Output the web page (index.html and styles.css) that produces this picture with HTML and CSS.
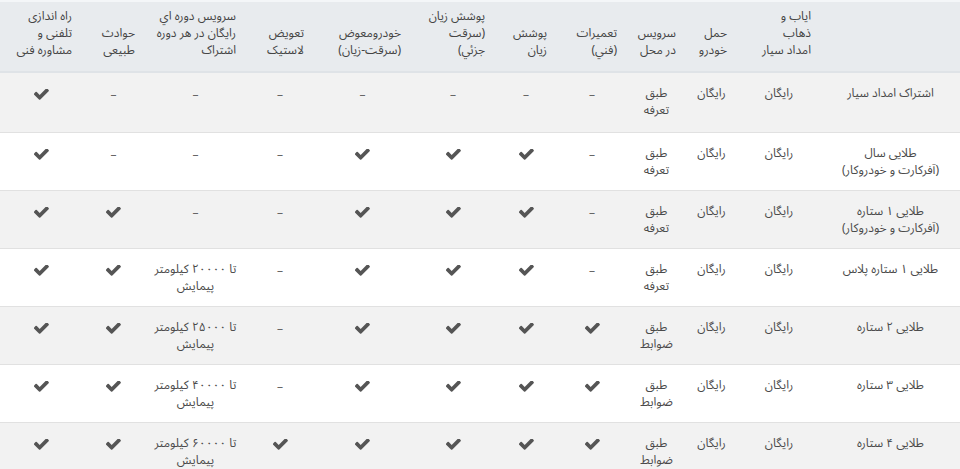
FILE: index.html
```html
<!DOCTYPE html>
<html lang="fa" dir="rtl">
<head>
<meta charset="utf-8">
<title>مقایسه اشتراک‌ها</title>
<link rel="stylesheet" href="styles.css">
</head>
<body>
<svg class="defs" width="0" height="0" aria-hidden="true">
  <symbol id="chk" viewBox="130 420 1550 1110">
    <path d="M1671 566q0 40-28 68l-724 724-136 136q-28 28-68 28t-68-28l-136-136-362-362q-28-28-28-68t28-68l136-136q28-28 68-28t68 28l294 295 656-657q28-28 68-28t68 28l136 136q28 28 28 68z"/>
  </symbol>
</svg>
<table class="plans">
  <colgroup>
    <col class="w-name"><col class="w-iab"><col class="w-haml"><col class="w-srv"><col class="w-tam"><col class="w-zian"><col class="w-zians"><col class="w-moavaz"><col class="w-tire"><col class="w-dore"><col class="w-havadess"><col class="w-tel">
  </colgroup>
  <thead>
    <tr>
      <th></th>
      <th>ایاب و<br>ذهاب<br>امداد سیار</th>
      <th>حمل<br>خودرو</th>
      <th>سرویس<br>در محل</th>
      <th>تعمیرات<br>(فني)</th>
      <th>پوشش<br>زیان</th>
      <th>پوشش زیان<br>(سرقت<br>جزئي)</th>
      <th>خودرومعوض<br>(سرقت-زیان)</th>
      <th>تعویض<br>لاستیک</th>
      <th>سرویس دوره اي<br>رایگان در هر دوره<br>اشتراک</th>
      <th>حوادث<br>طبیعی</th>
      <th>راه اندازی<br>تلفنی و<br>مشاوره فنی</th>
    </tr>
  </thead>
  <tbody>
    <tr>
      <td>اشتراک امداد سیار</td>
      <td>رایگان</td><td>رایگان</td><td>طبق<br>تعرفه</td>
      <td><span class="dash">–</span></td><td><span class="dash">–</span></td><td><span class="dash">–</span></td><td><span class="dash">–</span></td><td><span class="dash">–</span></td><td><span class="dash">–</span></td><td><span class="dash">–</span></td>
      <td><svg class="check"><use href="#chk"/></svg></td>
    </tr>
    <tr>
      <td>طلایی سال<br>(آفرکارت و خودروکار)</td>
      <td>رایگان</td><td>رایگان</td><td>طبق<br>تعرفه</td>
      <td><span class="dash">–</span></td>
      <td><svg class="check"><use href="#chk"/></svg></td>
      <td><svg class="check"><use href="#chk"/></svg></td>
      <td><svg class="check"><use href="#chk"/></svg></td>
      <td><span class="dash">–</span></td><td><span class="dash">–</span></td><td><span class="dash">–</span></td>
      <td><svg class="check"><use href="#chk"/></svg></td>
    </tr>
    <tr>
      <td>طلایی ۱ ستاره<br>(آفرکارت و خودروکار)</td>
      <td>رایگان</td><td>رایگان</td><td>طبق<br>تعرفه</td>
      <td><span class="dash">–</span></td>
      <td><svg class="check"><use href="#chk"/></svg></td>
      <td><svg class="check"><use href="#chk"/></svg></td>
      <td><svg class="check"><use href="#chk"/></svg></td>
      <td><span class="dash">–</span></td><td><span class="dash">–</span></td>
      <td><svg class="check"><use href="#chk"/></svg></td>
      <td><svg class="check"><use href="#chk"/></svg></td>
    </tr>
    <tr>
      <td>طلایی ۱ ستاره پلاس</td>
      <td>رایگان</td><td>رایگان</td><td>طبق<br>تعرفه</td>
      <td><span class="dash">–</span></td>
      <td><svg class="check"><use href="#chk"/></svg></td>
      <td><svg class="check"><use href="#chk"/></svg></td>
      <td><svg class="check"><use href="#chk"/></svg></td>
      <td><span class="dash">–</span></td>
      <td class="km">تا ۲۰۰۰۰ کیلومتر<br>پیمایش</td>
      <td><svg class="check"><use href="#chk"/></svg></td>
      <td><svg class="check"><use href="#chk"/></svg></td>
    </tr>
    <tr>
      <td>طلایی ۲ ستاره</td>
      <td>رایگان</td><td>رایگان</td><td>طبق<br>ضوابط</td>
      <td><svg class="check"><use href="#chk"/></svg></td>
      <td><svg class="check"><use href="#chk"/></svg></td>
      <td><svg class="check"><use href="#chk"/></svg></td>
      <td><svg class="check"><use href="#chk"/></svg></td>
      <td><span class="dash">–</span></td>
      <td class="km">تا ۲۵۰۰۰ کیلومتر<br>پیمایش</td>
      <td><svg class="check"><use href="#chk"/></svg></td>
      <td><svg class="check"><use href="#chk"/></svg></td>
    </tr>
    <tr>
      <td>طلایی ۳ ستاره</td>
      <td>رایگان</td><td>رایگان</td><td>طبق<br>ضوابط</td>
      <td><svg class="check"><use href="#chk"/></svg></td>
      <td><svg class="check"><use href="#chk"/></svg></td>
      <td><svg class="check"><use href="#chk"/></svg></td>
      <td><svg class="check"><use href="#chk"/></svg></td>
      <td><span class="dash">–</span></td>
      <td class="km">تا ۴۰۰۰۰ کیلومتر<br>پیمایش</td>
      <td><svg class="check"><use href="#chk"/></svg></td>
      <td><svg class="check"><use href="#chk"/></svg></td>
    </tr>
    <tr>
      <td>طلایی ۴ ستاره</td>
      <td>رایگان</td><td>رایگان</td><td>طبق<br>ضوابط</td>
      <td><svg class="check"><use href="#chk"/></svg></td>
      <td><svg class="check"><use href="#chk"/></svg></td>
      <td><svg class="check"><use href="#chk"/></svg></td>
      <td><svg class="check"><use href="#chk"/></svg></td>
      <td><svg class="check"><use href="#chk"/></svg></td>
      <td class="km">تا ۶۰۰۰۰ کیلومتر<br>پیمایش</td>
      <td><svg class="check"><use href="#chk"/></svg></td>
      <td><svg class="check"><use href="#chk"/></svg></td>
    </tr>
  </tbody>
</table>
</body>
</html>
```
FILE: styles.css
```css
html, body {
  margin: 0;
  padding: 0;
  background: #ffffff;
}
body {
  font-family: "Noto Sans Arabic", "DejaVu Sans", sans-serif;
  font-size: 12px;
  line-height: 17px;
  color: #4a4a4a;
  overflow: hidden;
}
.defs {
  position: absolute;
  width: 0;
  height: 0;
}
.plans {
  width: 960px;
  table-layout: fixed;
  border-collapse: collapse;
  border-top: 2px solid #f4f6f8;
}
.w-name { width: 139px; }
.w-iab { width: 84px; }
.w-haml { width: 51px; }
.w-srv { width: 59px; }
.w-tam { width: 70px; }
.w-zian { width: 62px; }
.w-zians { width: 84px; }
.w-moavaz { width: 97px; }
.w-tire { width: 68px; }
.w-dore { width: 101px; }
.w-havadess { width: 63px; }
.w-tel { width: 82px; }

.plans th {
  background: #e8ebee;
  font-weight: normal;
  text-align: right;
  vertical-align: bottom;
  padding: 6px 10px 12px 10px;
  border-bottom: 2px solid #dfe3e7;
  color: #444444;
  white-space: nowrap;
}
.plans td {
  text-align: center;
  vertical-align: top;
  padding: 12px 8px 11px 8px;
  border-top: 1px solid #e1e1e1;
}
.plans tbody tr:first-child td {
  padding-bottom: 13px;
}
.plans td.km {
  white-space: nowrap;
  padding-left: 2px;
  padding-right: 2px;
}
.plans tbody tr:nth-child(odd) td {
  background: #f2f2f2;
}
.check {
  width: 15px;
  height: 11px;
  fill: #555555;
  margin-top: 4px;
  display: inline-block;
}
.dash {
  display: inline-block;
  padding-top: 2px;
  color: #666666;
}
```
